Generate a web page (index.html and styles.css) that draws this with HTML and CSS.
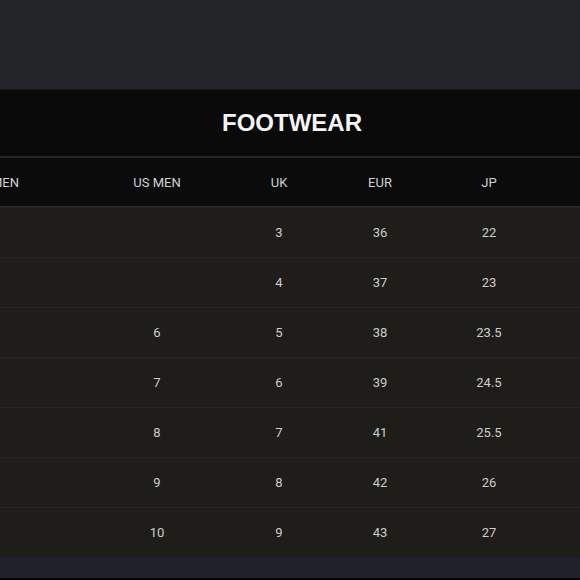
FILE: index.html
```html
<!DOCTYPE html>
<html>
<head>
<meta charset="utf-8">
<link rel="stylesheet" href="styles.css">
</head>
<body>
<div class="page">
  <div class="top"></div>
  <div class="title"><h1>FOOTWEAR</h1></div>
  <div class="sizes">
    <div class="row head">
      <div class="cell">US WOMEN</div><div class="cell">US MEN</div><div class="cell">UK</div><div class="cell">EUR</div><div class="cell">JP</div><div class="cell"></div>
    </div>
    <div class="row">
      <div class="cell"></div><div class="cell"></div><div class="cell">3</div><div class="cell">36</div><div class="cell">22</div><div class="cell"></div>
    </div>
    <div class="row">
      <div class="cell"></div><div class="cell"></div><div class="cell">4</div><div class="cell">37</div><div class="cell">23</div><div class="cell"></div>
    </div>
    <div class="row">
      <div class="cell"></div><div class="cell">6</div><div class="cell">5</div><div class="cell">38</div><div class="cell">23.5</div><div class="cell"></div>
    </div>
    <div class="row">
      <div class="cell"></div><div class="cell">7</div><div class="cell">6</div><div class="cell">39</div><div class="cell">24.5</div><div class="cell"></div>
    </div>
    <div class="row">
      <div class="cell"></div><div class="cell">8</div><div class="cell">7</div><div class="cell">41</div><div class="cell">25.5</div><div class="cell"></div>
    </div>
    <div class="row">
      <div class="cell"></div><div class="cell">9</div><div class="cell">8</div><div class="cell">42</div><div class="cell">26</div><div class="cell"></div>
    </div>
    <div class="row last">
      <div class="cell"></div><div class="cell">10</div><div class="cell">9</div><div class="cell">43</div><div class="cell">27</div><div class="cell"></div>
    </div>
  </div>
  <div class="bottom"></div>
</div>
</body>
</html>
```

FILE: styles.css
```css
html, body {
  margin: 0;
  padding: 0;
  background: #000;
  overflow: hidden;
}
.page {
  width: 580px;
  height: 580px;
  overflow: hidden;
  display: flex;
  flex-direction: column;
}
.top {
  height: 89px;
  flex: none;
  background: #232428;
  border-bottom: 1px solid #1b1c1f;
}
.title {
  height: 66px;
  flex: none;
  background: #0a0a0a;
  border-bottom: 2px solid #26272a;
  display: flex;
  align-items: center;
  justify-content: center;
}
.title h1 {
  margin: 0;
  font-family: "Liberation Sans", Arial, sans-serif;
  font-weight: bold;
  font-size: 24px;
  color: #f4f4f4;
  transform: translateX(2px);
}
.sizes {
  flex: none;
  width: 780px;
  margin-left: -100px;
  display: flex;
  flex-direction: column;
}
.row {
  display: grid;
  grid-template-columns: 170px 174px 70px 132px 86px 148px;
  height: 49px;
  background: #1e1d1a;
  border-bottom: 1px solid #26262a;
}
.row.head {
  height: 48px;
  background: #0b0b0b;
  border-bottom: 2px solid #272623;
}
.row.last {
  border-bottom: none;
}
.cell {
  display: flex;
  align-items: center;
  justify-content: center;
  font-family: Roboto, "Liberation Sans", sans-serif;
  font-size: 13px;
  color: #cdcdcd;
}
.head .cell {
  color: #d2d2d2;
}
.bottom {
  flex: none;
  height: 21px;
  background: #1f2128;
  border-bottom: 2px solid #050507;
}
```
